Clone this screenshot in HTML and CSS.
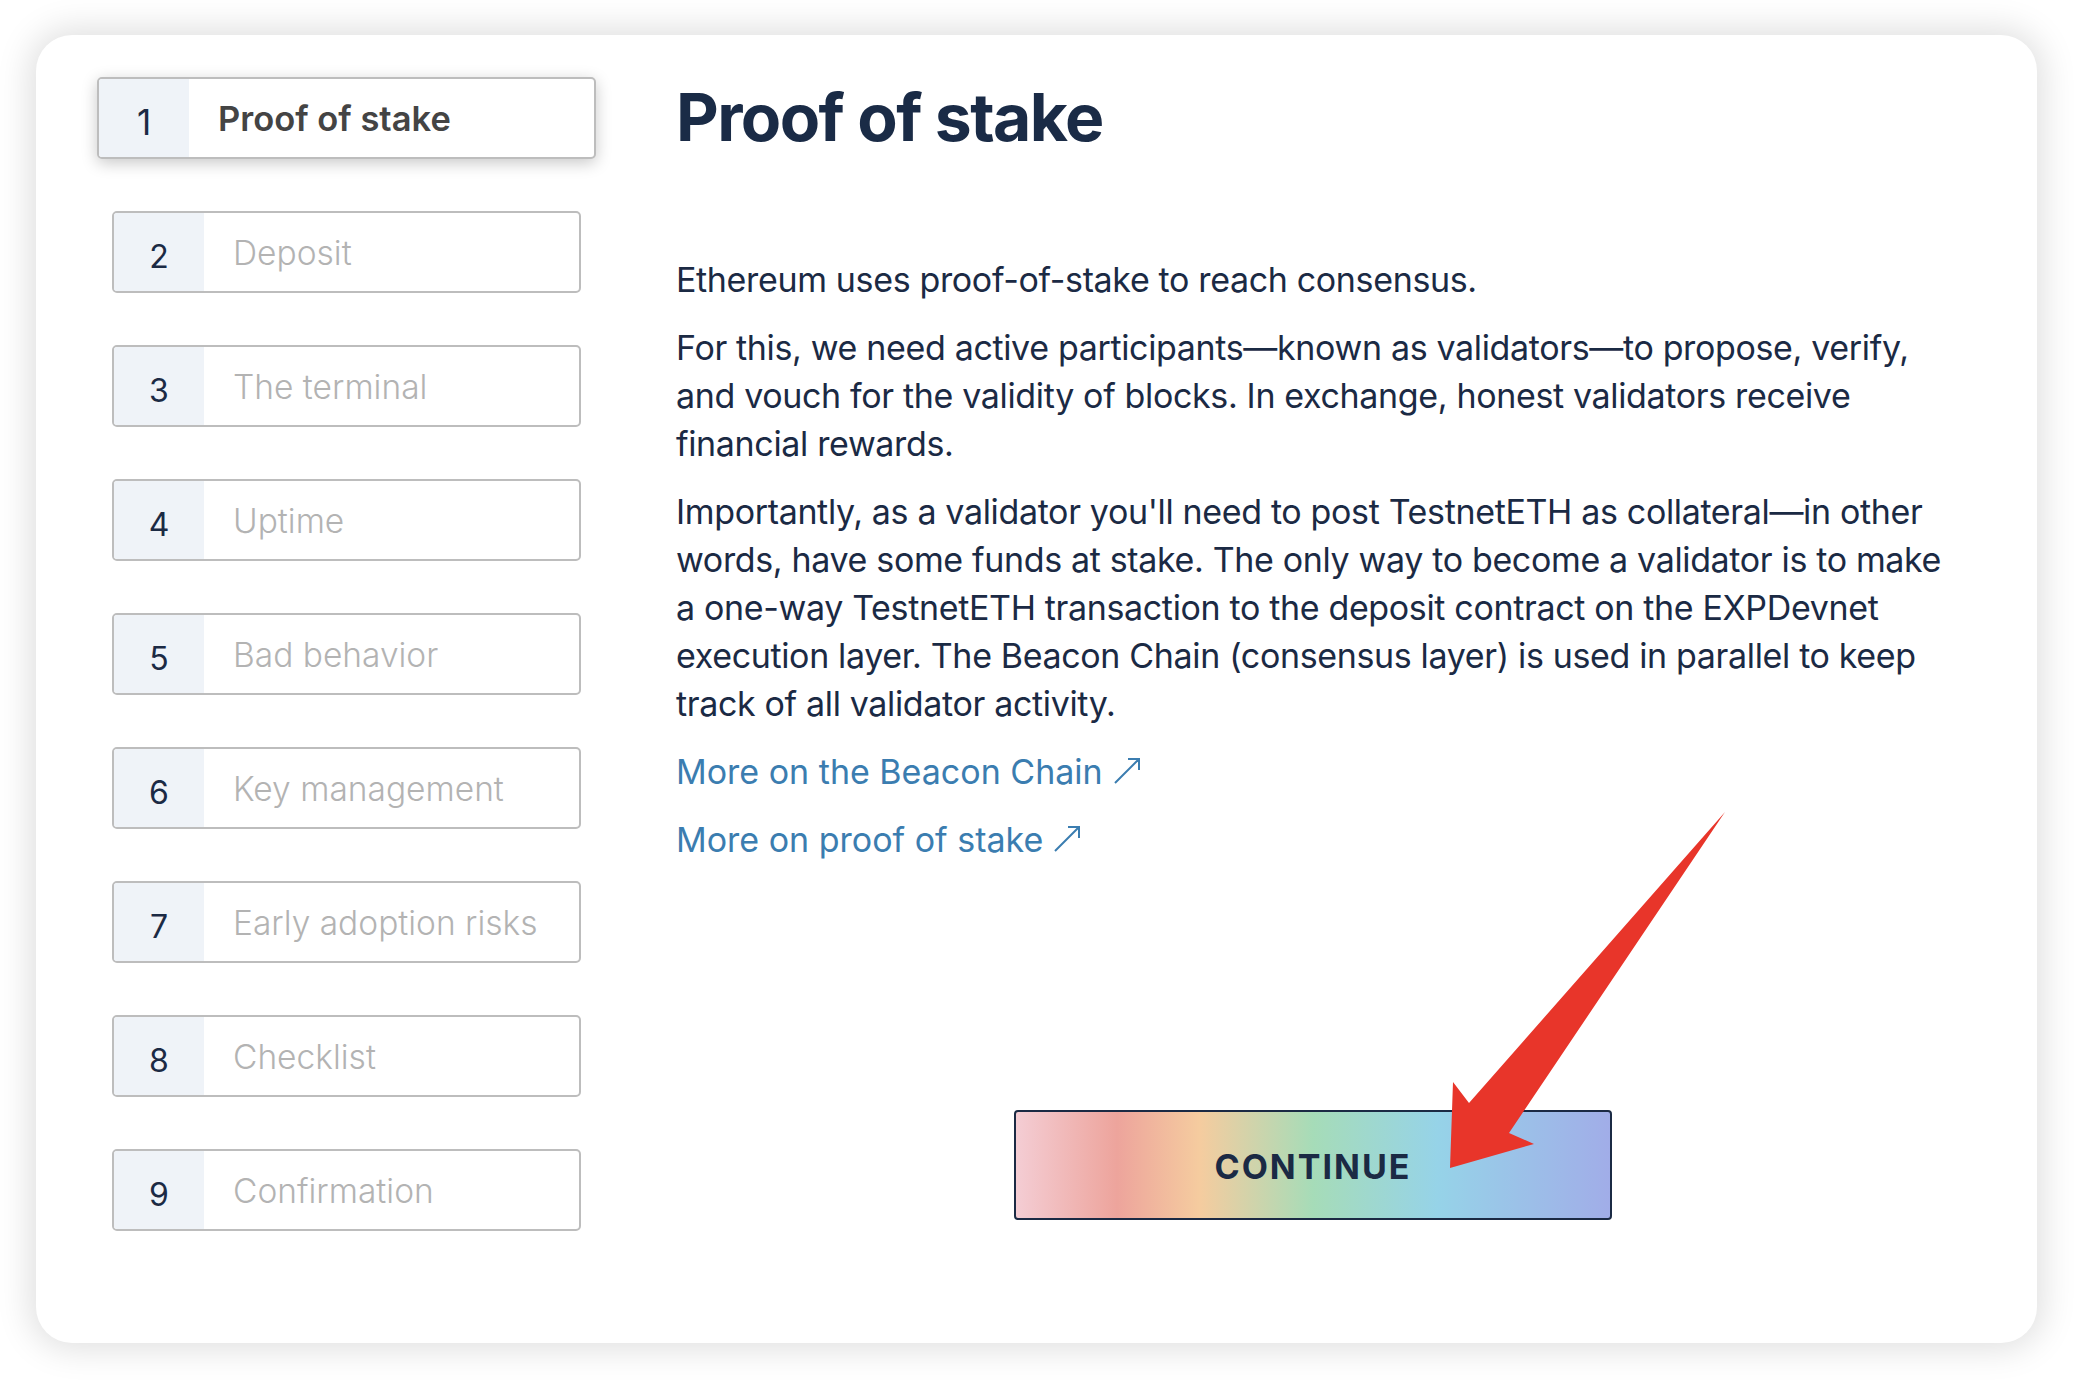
FILE: index.html
```html
<!DOCTYPE html>
<html lang="en">
<head>
<meta charset="utf-8">
<title>Proof of stake</title>
<link rel="stylesheet" href="styles.css">
</head>
<body>
<div class="card">
  <nav class="steps">
    <div class="step active"><span class="num">1</span><span class="label">Proof of stake</span></div>
    <div class="step"><span class="num">2</span><span class="label">Deposit</span></div>
    <div class="step"><span class="num">3</span><span class="label">The terminal</span></div>
    <div class="step"><span class="num">4</span><span class="label">Uptime</span></div>
    <div class="step"><span class="num">5</span><span class="label">Bad behavior</span></div>
    <div class="step"><span class="num">6</span><span class="label">Key management</span></div>
    <div class="step"><span class="num">7</span><span class="label">Early adoption risks</span></div>
    <div class="step"><span class="num">8</span><span class="label">Checklist</span></div>
    <div class="step"><span class="num">9</span><span class="label">Confirmation</span></div>
  </nav>
  <main class="content">
    <h1 class="title">Proof of stake</h1>
    <p class="text">Ethereum uses proof-of-stake to reach consensus.</p>
    <p class="text">For this, we need active participants—known as validators—to propose, verify, and vouch for the validity of blocks. In exchange, honest validators receive financial rewards.</p>
    <p class="text">Importantly, as a validator you'll need to post TestnetETH as collateral—in other words, have some funds at stake. The only way to become a validator is to make a one-way TestnetETH transaction to the deposit contract on the EXPDevnet execution layer. The Beacon Chain (consensus layer) is used in parallel to keep track of all validator activity.</p>
    <p class="text"><a class="link" href="#">More on the Beacon Chain<svg class="ext" width="28" height="28" viewBox="0 0 28 28" aria-hidden="true"><path d="M2 26 L26 2 M15 2 H26 V13" fill="none" stroke="currentColor" stroke-width="2"/></svg></a></p>
    <p class="text"><a class="link" href="#">More on proof of stake<svg class="ext" width="28" height="28" viewBox="0 0 28 28" aria-hidden="true"><path d="M2 26 L26 2 M15 2 H26 V13" fill="none" stroke="currentColor" stroke-width="2"/></svg></a></p>
    <button class="continue" type="button">CONTINUE</button>
  </main>
</div>
<svg class="annotation" width="2074" height="1380" viewBox="0 0 2074 1380" aria-hidden="true">
  <polygon points="1725,812 1509,1133 1534,1144 1450,1168 1453,1082 1469,1103" fill="#e8352a"/>
</svg>
</body>
</html>
```
FILE: styles.css
```css
html, body {
  margin: 0;
  padding: 0;
}
body {
  background: #ffffff;
  padding: 35px 37px 37px 36px;
  font-family: Inter, "Noto Sans", sans-serif;
  position: relative;
  box-sizing: border-box;
  width: 2074px;
  height: 1380px;
  overflow: hidden;
}
.card {
  box-sizing: border-box;
  width: 2001px;
  height: 1308px;
  background: #fff;
  border-radius: 36px;
  box-shadow: 0 0 34px 6px rgba(0, 0, 0, 0.13);
  display: flex;
  gap: 95px;
  padding: 42px 87px 0 76px;
}
.steps {
  width: 469px;
  flex: none;
  display: flex;
  flex-direction: column;
  gap: 52px;
}
.step {
  box-sizing: border-box;
  height: 82px;
  display: flex;
  border: 2px solid #bdbdbd;
  border-radius: 5px;
  background: #fff;
  overflow: hidden;
}
.num {
  width: 90px;
  flex: none;
  background: #eff3f8;
  display: flex;
  align-items: center;
  justify-content: center;
  padding-top: 8px;
  box-sizing: border-box;
  font-size: 32px;
  color: #1b2a44;
}
.label {
  align-self: center;
  padding-left: 29px;
  padding-top: 2px;
  font-size: 33.5px;
  font-weight: 300;
  color: #b3b3b3;
}
.step.active {
  margin: 0 -15px;
  box-shadow: 0 4px 16px rgba(0, 0, 0, 0.22);
}
.step.active .num {
  font-size: 35px;
}
.step.active .label {
  font-size: 34.5px;
  font-weight: 600;
  color: #444444;
  padding-top: 1px;
}
.content {
  flex: 1;
  display: flex;
  flex-direction: column;
}
.title {
  margin: 1px 0 99px;
  font-size: 66px;
  line-height: 1.2;
  font-weight: 700;
  letter-spacing: -1.6px;
  color: #1a2b46;
}
.text {
  margin: 0 0 20px;
  font-size: 34px;
  line-height: 48px;
  letter-spacing: -0.35px;
  color: #1b2a44;
}
.link {
  color: #3b7db0;
  text-decoration: none;
  letter-spacing: 0;
}
.ext {
  display: inline-block;
  margin-left: 10px;
  vertical-align: -1px;
}
.continue {
  align-self: center;
  margin-top: 226px;
  width: 598px;
  height: 110px;
  border: 2px solid #1b2a44;
  border-radius: 4px;
  background: linear-gradient(90deg, #f4cdd4 0%, #eda49c 17%, #f5cc9f 31%, #a6dcb8 50%, #96d3e8 71%, #a1ade8 100%);
  font-family: Inter, "Noto Sans", sans-serif;
  font-size: 34px;
  font-weight: 700;
  letter-spacing: 2px;
  color: #1b2a44;
  padding: 2px 0 0;
}
.annotation {
  position: absolute;
  left: 0;
  top: 0;
  pointer-events: none;
}
```
